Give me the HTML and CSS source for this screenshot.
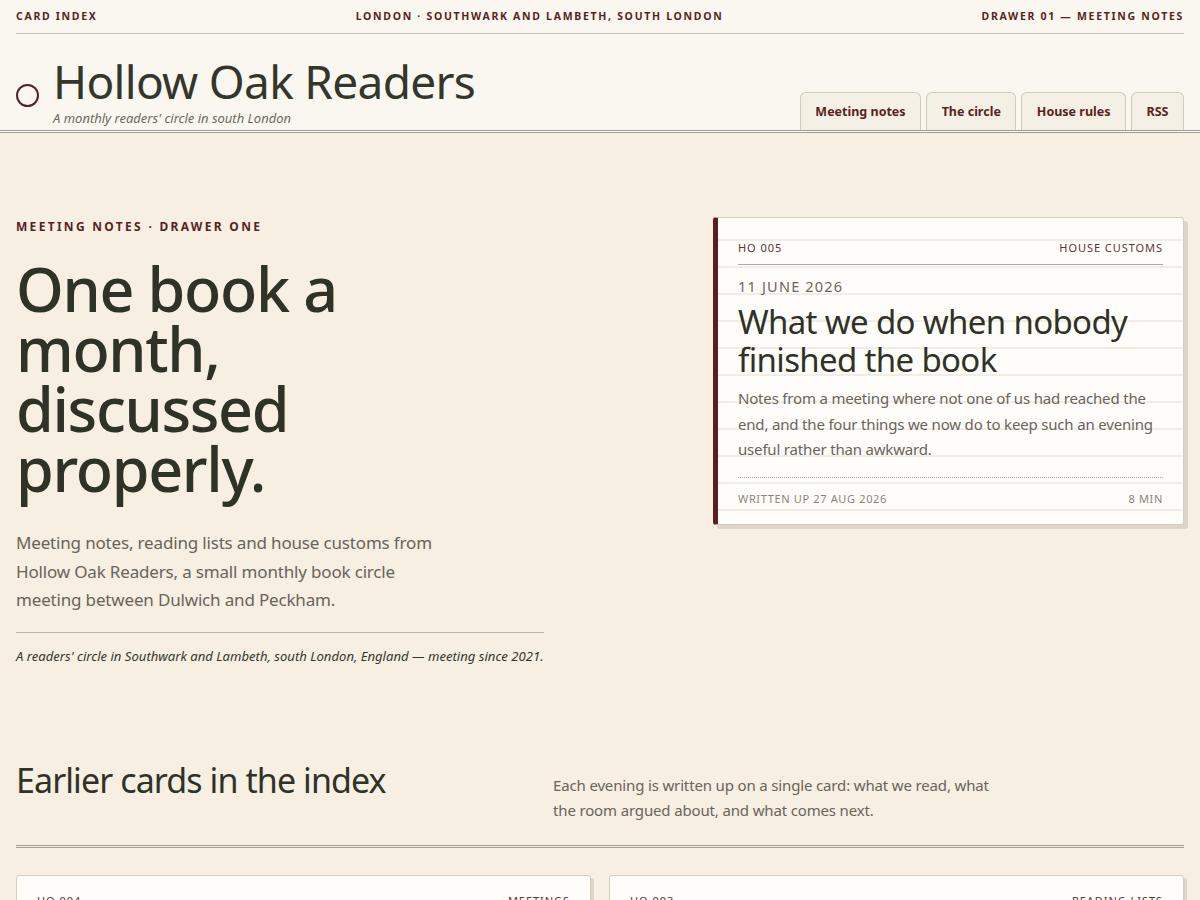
FILE: index.html
```html
<!DOCTYPE html>
<html lang="en">
<head>
<meta charset="utf-8">
<title>Hollow Oak Readers</title>
<link rel="stylesheet" href="styles.css">
</head>
<body>
<header class="masthead">
  <div class="topbar">
    <span>Card index</span>
    <span>London · Southwark and Lambeth, south London</span>
    <span>Drawer 01 — Meeting notes</span>
  </div>
  <div class="brandrow">
    <div class="brand">
      <span class="ring"></span>
      <div class="brand-text">
        <div class="site-title">Hollow Oak Readers</div>
        <div class="tagline">A monthly readers' circle in south London</div>
      </div>
    </div>
    <nav class="tabs">
      <a class="tab">Meeting notes</a>
      <a class="tab">The circle</a>
      <a class="tab">House rules</a>
      <a class="tab">RSS</a>
    </nav>
  </div>
</header>

<main class="page">
  <section class="hero">
    <div class="hero-copy">
      <div class="eyebrow">Meeting notes · Drawer one</div>
      <h1 class="hero-title">One book a month, discussed properly.</h1>
      <p class="hero-lede">Meeting notes, reading lists and house customs from Hollow Oak Readers, a small monthly book circle meeting between Dulwich and Peckham.</p>
      <p class="hero-note">A readers' circle in Southwark and Lambeth, south London, England — meeting since 2021.</p>
    </div>
    <article class="card card-feature">
      <div class="card-meta"><span>HO 005</span><span>House customs</span></div>
      <div class="card-date">11 June 2026</div>
      <h2 class="card-title">What we do when nobody finished the book</h2>
      <p class="card-desc">Notes from a meeting where not one of us had reached the end, and the four things we now do to keep such an evening useful rather than awkward.</p>
      <div class="card-foot"><span>Written up 27 Aug 2026</span><span>8 min</span></div>
    </article>
  </section>

  <section class="earlier">
    <div class="earlier-head">
      <h2 class="earlier-title">Earlier cards in the index</h2>
      <p class="earlier-lede">Each evening is written up on a single card: what we read, what the room argued about, and what comes next.</p>
    </div>
    <div class="grid">
      <article class="card card-small">
        <div class="card-meta"><span>HO 004</span><span>Meetings</span></div>
      </article>
      <article class="card card-small">
        <div class="card-meta"><span>HO 003</span><span>Reading lists</span></div>
      </article>
    </div>
  </section>
</main>
</body>
</html>
```

FILE: styles.css
```css
* { box-sizing: border-box; }
html, body { margin: 0; padding: 0; }
body {
  background: #f6efe2;
  color: #2f3327;
  font-family: "Noto Sans", "Open Sans", sans-serif;
}

.masthead {
  background: #faf7f0;
  border-bottom: 3px double #a39d90;
  padding: 0 16px;
}
.topbar {
  display: flex;
  justify-content: space-between;
  align-items: center;
  height: 34px;
  border-bottom: 1px solid #cbc4b6;
  font-size: 10.5px;
  font-weight: 700;
  letter-spacing: 1.7px;
  text-transform: uppercase;
  color: #5b1f22;
  padding-bottom: 2px;
}
.brandrow {
  display: flex;
  justify-content: space-between;
  align-items: flex-end;
  padding-top: 23px;
}
.brand {
  display: flex;
  align-items: flex-end;
  gap: 14px;
  padding-bottom: 3px;
}
.ring {
  width: 23px;
  height: 23px;
  border: 2px solid #5b1f22;
  border-radius: 50%;
  margin-bottom: 20px;
  flex: none;
}
.site-title {
  font-size: 46px;
  line-height: 48px;
  margin-bottom: 4px;
  letter-spacing: -0.015em;
  color: #33362b;
}
.tagline {
  font-size: 13px;
  font-style: italic;
  color: #6e695e;
  line-height: 18px;
}
.tabs {
  display: flex;
  gap: 5px;
}
.tab {
  display: block;
  height: 38px;
  line-height: 38px;
  padding: 0 14.5px;
  font-size: 12.5px;
  font-weight: 700;
  color: #5b1f22;
  background: #f5f0e5;
  border: 1px solid #d2cabb;
  border-bottom: none;
  border-radius: 6px 6px 0 0;
}

.page { padding: 0 16px; }

.hero {
  display: grid;
  grid-template-columns: 528px 471px;
  justify-content: space-between;
  align-items: start;
  padding-top: 84px;
}
.hero-copy { padding-top: 1px; }
.eyebrow {
  font-size: 12px;
  font-weight: 700;
  letter-spacing: 2.3px;
  text-transform: uppercase;
  color: #5b1f22;
  line-height: 18px;
}
.hero-title {
  margin: 23px 0 0;
  font-size: 61px;
  line-height: 60px;
  font-weight: 500;
  letter-spacing: -0.022em;
  color: #2f3327;
  max-width: 440px;
}
.hero-lede {
  margin: 30px 0 0;
  font-size: 17px;
  line-height: 28.5px;
  letter-spacing: -0.01em;
  color: #69645a;
  max-width: 430px;
}
.hero-note {
  margin: 17px 0 0;
  border-top: 1px solid #bdb5a7;
  padding-top: 14px;
  font-size: 13.1px;
  font-style: italic;
  color: #34372c;
  white-space: nowrap;
}

.card {
  background-color: #fefdf9;
  border: 1px solid #d5cdbd;
  border-radius: 3px;
  box-shadow: 4px 4px 0 #ddd6c7;
}
.card-feature {
  border-left: 5px solid #5b1f22;
  padding: 21px 20px 16px 20px;
  background-image: repeating-linear-gradient(to bottom, transparent 0, transparent 25px, #f1ede4 25px, #f1ede4 27px);
  background-position: 0 -4px;
}
.card-meta {
  display: flex;
  justify-content: space-between;
  font-size: 11px;
  letter-spacing: 0.95px;
  text-transform: uppercase;
  color: #5a3634;
  line-height: 18px;
  padding-bottom: 7px;
  border-bottom: 1px solid #b3aaa4;
}
.card-date {
  margin-top: 10px;
  font-size: 14.5px;
  letter-spacing: 1.2px;
  text-transform: uppercase;
  color: #6b665c;
  line-height: 22px;
}
.card-title {
  margin: 6px 0 0;
  font-size: 33px;
  line-height: 38px;
  font-weight: 400;
  letter-spacing: -0.02em;
  color: #2f3327;
}
.card-desc {
  margin: 7px 0 0;
  font-size: 15px;
  line-height: 25.5px;
  letter-spacing: -0.012em;
  color: #69645a;
}
.card-foot {
  margin-top: 14px;
  border-top: 1px dotted #a9a296;
  padding-top: 12px;
  display: flex;
  justify-content: space-between;
  font-size: 11px;
  letter-spacing: 0.65px;
  text-transform: uppercase;
  color: #8b857a;
  line-height: 18px;
}

.earlier { padding-top: 93px; }
.earlier-head {
  display: grid;
  grid-template-columns: 537px 450px;
  align-items: start;
  padding-bottom: 22px;
  border-bottom: 3px double #a39d90;
}
.earlier-title {
  margin: 0;
  font-size: 34px;
  line-height: 44px;
  font-weight: 400;
  letter-spacing: -0.027em;
  color: #2f3327;
}
.earlier-lede {
  margin: 15px 0 0;
  font-size: 15px;
  line-height: 25px;
  letter-spacing: -0.01em;
  color: #69645a;
}
.grid {
  display: grid;
  grid-template-columns: 1fr 1fr;
  gap: 18px;
  margin-top: 27px;
}
.card-small {
  padding: 16px 20px 16px;
  height: 120px;
  box-shadow: 3px 3px 0 #ddd6c7;
}
.card-small .card-meta {
  border-bottom: none;
}
```
